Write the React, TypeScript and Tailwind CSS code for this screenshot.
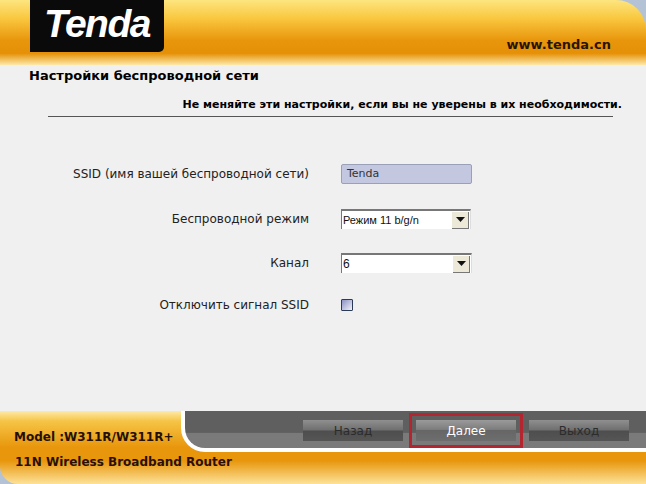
import React from 'react';

const verdana = "font-['DejaVu_Sans',sans-serif]";

function Row({ label, className, children }: { label: string; className: string; children: React.ReactNode }) {
  return (
    <div className={`flex items-center ${className}`}>
      <div className="w-[309px] text-right text-[12px] leading-[16px] text-[#222]">{label}</div>
      <div className="ml-[32px] flex items-center">{children}</div>
    </div>
  );
}

function FakeSelect({ value, className, textClass }: { value: string; className: string; textClass: string }) {
  return (
    <div className={`flex h-[20px] items-center border-t-2 border-l border-[#777] border-r border-r-[#ddd] bg-white ${className}`}>
      <span className={`flex-1 pl-[1px] font-['Liberation_Sans',sans-serif] text-[#111] ${textClass}`}>{value}</span>
      <span className="mr-[1px] flex h-[17px] w-[17px] items-center justify-center border-r border-b border-[#777] bg-[#ece9d8]">
        <svg width="9" height="5" viewBox="0 0 9 5">
          <path d="M0 0h9L4.5 5z" fill="#111" />
        </svg>
      </span>
    </div>
  );
}

function NavButton({ label, active }: { label: string; active?: boolean }) {
  return (
    <div
      className={`flex h-[21px] w-[100px] items-center justify-center text-[12px] leading-none ${
        active
          ? 'bg-[linear-gradient(#9a9a9a_0%,#7d7d7d_45%,#666_50%,#6e6e6e_100%)] text-white'
          : 'bg-[linear-gradient(#8f8f8f_0%,#6f6f6f_48%,#4e4e4e_52%,#555_100%)] text-[#2c2c2c]'
      }`}
    >
      {label}
    </div>
  );
}

export default function App() {
  return (
    <div className={`flex h-[484px] w-[646px] flex-col overflow-hidden bg-[#f0f0f0] ${verdana}`}>
      <header className="flex h-[65px] shrink-0 justify-between bg-[#b4c2d6]">
        <div className="flex w-full justify-between rounded-tr-[30px] bg-[linear-gradient(#fde57f_0%,#f9c83f_28%,#e8960c_62%,#e59007_82%,#fde9a9_100%)]">
          <div className="ml-[30px] flex h-[52px] w-[134px] items-center justify-center rounded-br-[5px] bg-[#0a0a0a] pb-[6px]">
            <span className="font-['Liberation_Sans',sans-serif] text-[39px] font-bold italic leading-none tracking-[-1.5px] text-white">
              Tenda
            </span>
          </div>
          <div className="mr-[35px] mt-[36px] text-[13px] font-bold leading-[17px] text-[#2a1405]">www.tenda.cn</div>
        </div>
      </header>

      <main className="flex-1">
        <h1 className="ml-[29px] mt-[2px] text-[13px] font-bold leading-[18px] text-black">Настройки беспроводной сети</h1>
        <p className="mr-[24px] mt-[13px] text-right text-[11px] font-bold leading-[14px] text-black">
          Не меняйте эти настройки, если вы не уверены в их необходимости.
        </p>
        <div className="ml-[48px] mt-[4px] h-px w-[565px] bg-[#555]" />

        <Row label="SSID (имя вашей беспроводной сети)" className="mt-[47px]">
          <div className="flex h-[20px] w-[131px] items-center rounded-[2px] border border-[#9aa0b8] bg-[#c3c7e0] pl-[5px] text-[11px] text-[#333]">
            Tenda
          </div>
        </Row>
        <Row label="Беспроводной режим" className="mt-[25px]">
          <FakeSelect value="Режим 11 b/g/n" className="w-[130px]" textClass="text-[11px]" />
        </Row>
        <Row label="Канал" className="mt-[24px]">
          <FakeSelect value="6" className="w-[131px]" textClass="text-[12px]" />
        </Row>
        <Row label="Отключить сигнал SSID" className="mt-[24px]">
          <div className="h-[12px] w-[12px] rounded-[1px] border-[1.5px] border-[#2b3a55] bg-[linear-gradient(135deg,#8a90c4,#f2f2fa)]" />
        </Row>
      </main>

      <footer className="h-[73px] shrink-0 bg-[#b4c2d6]">
        <div className="relative h-full rounded-bl-[18px] bg-[linear-gradient(#fdeaa8_0%,#f6c445_14%,#e8960c_50%,#e8960c_68%,#fde29a_100%)]">
          <div className="absolute left-[14px] top-[18px] text-[12px] font-bold leading-[16px] text-[#241005]">
            Model :W311R/W311R+
          </div>
          <div className="absolute left-[15px] top-[43px] text-[12px] font-bold leading-[16px] text-[#2a1005]">
            11N Wireless Broadband Router
          </div>
          <div className="absolute left-[181px] right-0 top-0 h-[41px] rounded-bl-[24px] border-b-[4px] border-l-[4px] border-white bg-[linear-gradient(#5f5f5f_0%,#5f5f5f_58%,#7a7a7a_59%,#7a7a7a_100%)]">
            <div className="ml-[118px] mt-[9px] flex items-center">
              <NavButton label="Назад" />
              <div className="mx-[6px] -my-[7px] border-[3px] border-[#b3262f] px-[4px] py-[4px]">
                <NavButton label="Далее" active />
              </div>
              <NavButton label="Выход" />
            </div>
          </div>
        </div>
      </footer>
    </div>
  );
}
